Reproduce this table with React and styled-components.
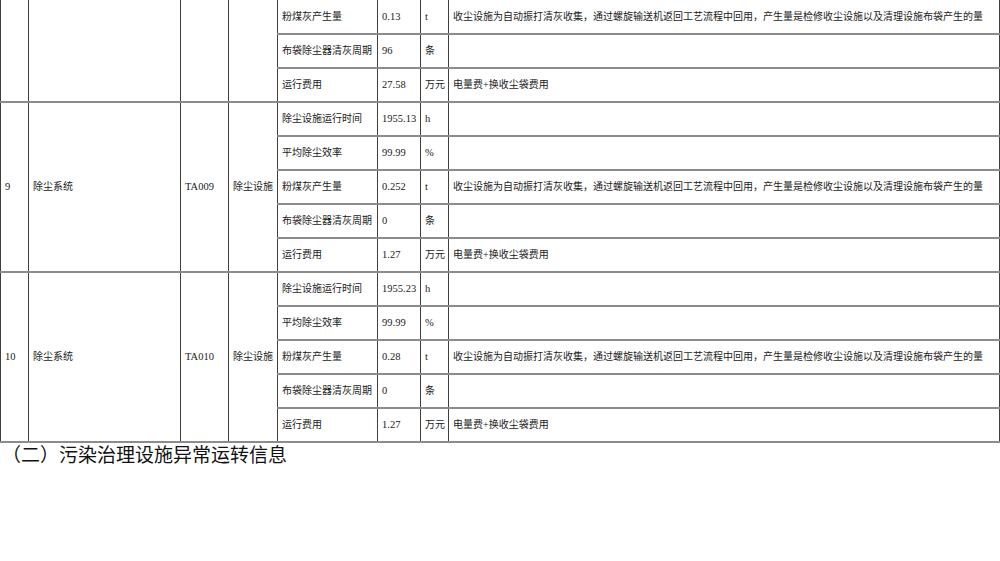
import React from 'react';
import styled, { createGlobalStyle } from 'styled-components';

const GlobalStyle = createGlobalStyle`
  html, body {
    margin: 0;
    padding: 0;
    background: #fff;
  }
  body {
    width: 1000px;
    height: 561px;
    overflow: hidden;
    font-family: "Liberation Serif", "Noto Sans CJK SC", serif;
    color: #1a1a1a;
  }
`;

const Page = styled.div`
  display: flex;
  flex-direction: column;
  width: 1000px;
`;

const Table = styled.table`
  width: 999px;
  border-collapse: collapse;
  table-layout: fixed;
`;

const Row = styled.tr`
  height: 34px;
`;

const Cell = styled.td`
  padding: 0 0 0 4px;
  font-size: ${(p) => (p.$num ? '10.5px' : '10px')};
  line-height: 14px;
  white-space: nowrap;
  overflow: hidden;
  vertical-align: middle;
  border-left: 1px solid #3f3f3f;
  border-right: 1px solid #3f3f3f;
  border-top: ${(p) => (p.$noTop ? 'none' : '2px solid #8c8c8c')};
  border-bottom: 2px solid #8c8c8c;
`;

const Heading = styled.h2`
  margin: 0;
  padding-left: 2px;
  font-family: "Noto Sans CJK SC", sans-serif;
  font-weight: 400;
  font-size: 19px;
  line-height: 22px;
  color: #111;
`;

const NOTE =
  '收尘设施为自动振打清灰收集，通过螺旋输送机返回工艺流程中回用，产生量是检修收尘设施以及清理设施布袋产生的量';
const COST = '电量费+换收尘袋费用';

const widths = [28, 152, 48, 49, 100, 43, 28, 551];

const groups = [
  {
    no: '',
    name: '',
    code: '',
    kind: '',
    rows: [
      ['粉煤灰产生量', '0.13', 't', NOTE],
      ['布袋除尘器清灰周期', '96', '条', ''],
      ['运行费用', '27.58', '万元', COST],
    ],
  },
  {
    no: '9',
    name: '除尘系统',
    code: 'TA009',
    kind: '除尘设施',
    rows: [
      ['除尘设施运行时间', '1955.13', 'h', ''],
      ['平均除尘效率', '99.99', '%', ''],
      ['粉煤灰产生量', '0.252', 't', NOTE],
      ['布袋除尘器清灰周期', '0', '条', ''],
      ['运行费用', '1.27', '万元', COST],
    ],
  },
  {
    no: '10',
    name: '除尘系统',
    code: 'TA010',
    kind: '除尘设施',
    rows: [
      ['除尘设施运行时间', '1955.23', 'h', ''],
      ['平均除尘效率', '99.99', '%', ''],
      ['粉煤灰产生量', '0.28', 't', NOTE],
      ['布袋除尘器清灰周期', '0', '条', ''],
      ['运行费用', '1.27', '万元', COST],
    ],
  },
];

const App = () => {
  return (
    <Page>
      <GlobalStyle />
      <Table>
        <colgroup>
          {widths.map((w, i) => (
            <col key={i} style={{ width: w }} />
          ))}
        </colgroup>
        <tbody>
          {groups.map((g, gi) =>
            g.rows.map((r, ri) => {
              const first = gi === 0 && ri === 0;
              const span = g.rows.length;
              return (
                <Row key={`${gi}-${ri}`}>
                  {ri === 0 && (
                    <>
                      <Cell $num $noTop={first} rowSpan={span}>{g.no}</Cell>
                      <Cell $noTop={first} rowSpan={span}>{g.name}</Cell>
                      <Cell $num $noTop={first} rowSpan={span}>{g.code}</Cell>
                      <Cell $noTop={first} rowSpan={span}>{g.kind}</Cell>
                    </>
                  )}
                  {r.map((v, ci) => (
                    <Cell key={ci} $num={ci === 1 || (ci === 2 && v.length === 1 && v !== '条')} $noTop={first}>
                      {v}
                    </Cell>
                  ))}
                </Row>
              );
            })
          )}
        </tbody>
      </Table>
      <Heading>（二）污染治理设施异常运转信息</Heading>
    </Page>
  );
};

export default App;
